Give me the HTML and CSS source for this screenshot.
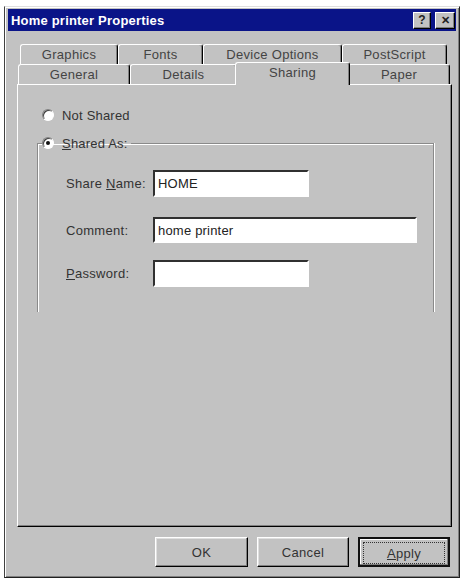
FILE: index.html
```html
<!DOCTYPE html>
<html lang="en">
<head>
  <meta charset="UTF-8" />
  <title>Home printer Properties</title>
  <link rel="stylesheet" href="styles.css">
</head>
<body>
  <div class="window">
    <div class="titlebar">
      <span class="title">Home printer Properties</span>
      <div class="caption-btns">
        <span class="cap-btn">?</span>
        <span class="cap-btn close">&#x2715;</span>
      </div>
    </div>

    <div class="tab-row back">
      <div class="tab w-graphics">Graphics</div>
      <div class="tab w-fonts">Fonts</div>
      <div class="tab w-device">Device Options</div>
      <div class="tab w-ps">PostScript</div>
    </div>
    <div class="tab-row front">
      <div class="tab w-general">General</div>
      <div class="tab w-details">Details</div>
      <div class="tab active w-sharing">Sharing</div>
      <div class="tab w-paper">Paper</div>
    </div>

    <div class="panel">
      <label class="radio-row">
        <span class="radio"></span>
        <span>Not Shared</span>
      </label>

      <fieldset class="group">
        <legend>
          <label class="radio-row">
            <span class="radio checked"></span>
            <span><u>S</u>hared As:</span>
          </label>
        </legend>
        <div class="form-grid">
          <span class="lbl">Share <u>N</u>ame:</span>
          <div class="field short">HOME</div>
          <span class="lbl">Comment:</span>
          <div class="field long">home printer</div>
          <span class="lbl"><u>P</u>assword:</span>
          <div class="field short"></div>
        </div>
      </fieldset>
    </div>

    <div class="button-row">
      <button class="btn ok">OK</button>
      <button class="btn">Cancel</button>
      <button class="btn default"><span class="focus"><u>A</u>pply</span></button>
    </div>
  </div>
</body>
</html>
```

FILE: styles.css
```css
body {
  margin: 0;
  background: #fff;
  font-family: "Liberation Sans", Arial, sans-serif;
  font-size: 13px;
  color: #333;
}
.window {
  box-sizing: border-box;
  width: 456px;
  height: 572px;
  margin: 6px 0 0 4px;
  padding: 2px 3px;
  background: #c2c2c2;
  border: 1px solid;
  border-color: #dfdfdf #202020 #202020 #404040;
  box-shadow: inset 1px 1px 0 #fff, inset -1px -1px 0 #808080;
}
.titlebar {
  height: 22px;
  background: #0a1488;
  display: flex;
  align-items: center;
  justify-content: space-between;
  padding: 0 1px 0 3px;
}
.title {
  color: #fff;
  font-weight: bold;
  font-size: 13px;
  letter-spacing: 0.2px;
}
.caption-btns {
  display: flex;
  gap: 4px;
}
.cap-btn {
  box-sizing: border-box;
  width: 18px;
  height: 17px;
  background: #c2c2c2;
  border: 1px solid;
  border-color: #fff #000 #000 #fff;
  box-shadow: inset -1px -1px 0 #808080;
  display: flex;
  align-items: center;
  justify-content: center;
  font-weight: bold;
  font-size: 12px;
  color: #222;
}
.cap-btn.close {
  width: 20px;
  font-size: 11px;
}

/* tabs */
.tab-row {
  display: flex;
  height: 20px;
}
.tab-row.back {
  margin-top: 13px;
  padding-left: 12px;
}
.tab-row.front {
  padding-left: 10px;
}
.tab {
  box-sizing: border-box;
  height: 20px;
  background: #c2c2c2;
  border-top: 1px solid #fff;
  border-left: 1px solid #fff;
  border-right: 1px solid #000;
  box-shadow: inset -1px 0 0 #808080;
  border-radius: 3px 3px 0 0;
  display: flex;
  align-items: center;
  justify-content: center;
  color: #444;
  letter-spacing: 0.3px;
}
.tab.active {
  position: relative;
  z-index: 1;
  height: 23px;
  margin: -2px -2px -1px;
  padding-bottom: 4px;
}
.w-graphics { width: 98px; }
.w-fonts { width: 85px; }
.w-device { width: 139px; }
.w-ps { width: 105px; }
.w-general { width: 112px; }
.w-details { width: 107px; }
.w-sharing { width: 115px; }
.w-paper { width: 102px; }

/* page body */
.panel {
  box-sizing: border-box;
  width: 435px;
  height: 443px;
  margin-left: 9px;
  padding: 22px 0 0 19px;
  border: 1px solid;
  border-color: #fff #000 #000 #fff;
  box-shadow: inset -1px -1px 0 #808080;
}
.radio-row {
  display: flex;
  align-items: center;
  gap: 8px;
  height: 16px;
  margin-left: 5px;
  letter-spacing: 0.2px;
}
.radio {
  box-sizing: border-box;
  width: 12px;
  height: 12px;
  border-radius: 50%;
  background: #fff;
  border: 1px solid;
  border-color: #808080 #fff #fff #808080;
  box-shadow: inset 1px 1px 0 #404040;
  position: relative;
}
.radio.checked::after {
  content: "";
  position: absolute;
  left: 3px;
  top: 3px;
  width: 4px;
  height: 4px;
  border-radius: 50%;
  background: #111;
}
.group {
  box-sizing: border-box;
  width: 397px;
  height: 177px;
  margin: 12px 0 0 0;
  padding: 0 0 0 28px;
  border: 1px solid #8a8a8a;
  border-bottom: none;
  box-shadow: inset 1px 1px 0 #fff, 1px 0 0 #fff;
}
.group legend {
  margin-left: -24px;
  padding: 0 3px 0 0;
}
.group legend .radio-row {
  margin-left: 0;
}
.form-grid {
  display: grid;
  grid-template-columns: 87px auto;
  grid-template-rows: 27px 26px 27px;
  row-gap: 20px;
  align-items: center;
  justify-items: start;
  margin-top: 19px;
}
.form-grid .field.long {
  margin-top: 0;
}
.form-grid > :nth-child(5),
.form-grid > :nth-child(6) {
  margin-top: -6px;
}
.lbl {
  letter-spacing: 0.3px;
}
.field {
  box-sizing: border-box;
  height: 100%;
  background: #fff;
  border: 2px solid;
  border-color: #303030 #fff #fff #303030;
  padding: 0 3px;
  display: flex;
  align-items: center;
  color: #222;
  letter-spacing: 0.2px;
}
.field.short { width: 156px; }
.field.long { width: 264px; }

/* dialog buttons */
.button-row {
  display: flex;
  justify-content: flex-end;
  gap: 9px;
  margin: 10px 6px 0 0;
}
.btn {
  box-sizing: border-box;
  width: 92px;
  height: 30px;
  background: #c2c2c2;
  border: 1px solid;
  border-color: #fff #000 #000 #fff;
  box-shadow: inset -1px -1px 0 #808080, inset 1px 1px 0 #dfdfdf;
  font-family: inherit;
  font-size: 13px;
  color: #333;
  letter-spacing: 0.3px;
  padding: 0;
}
.btn.ok { width: 93px; }
.btn.default {
  border: 2px solid #111;
  box-shadow: inset -1px -1px 0 #808080, inset 1px 1px 0 #fff;
  padding: 3px;
}
.focus {
  display: flex;
  align-items: center;
  justify-content: center;
  height: 100%;
  border: 1px dotted #333;
}
```
